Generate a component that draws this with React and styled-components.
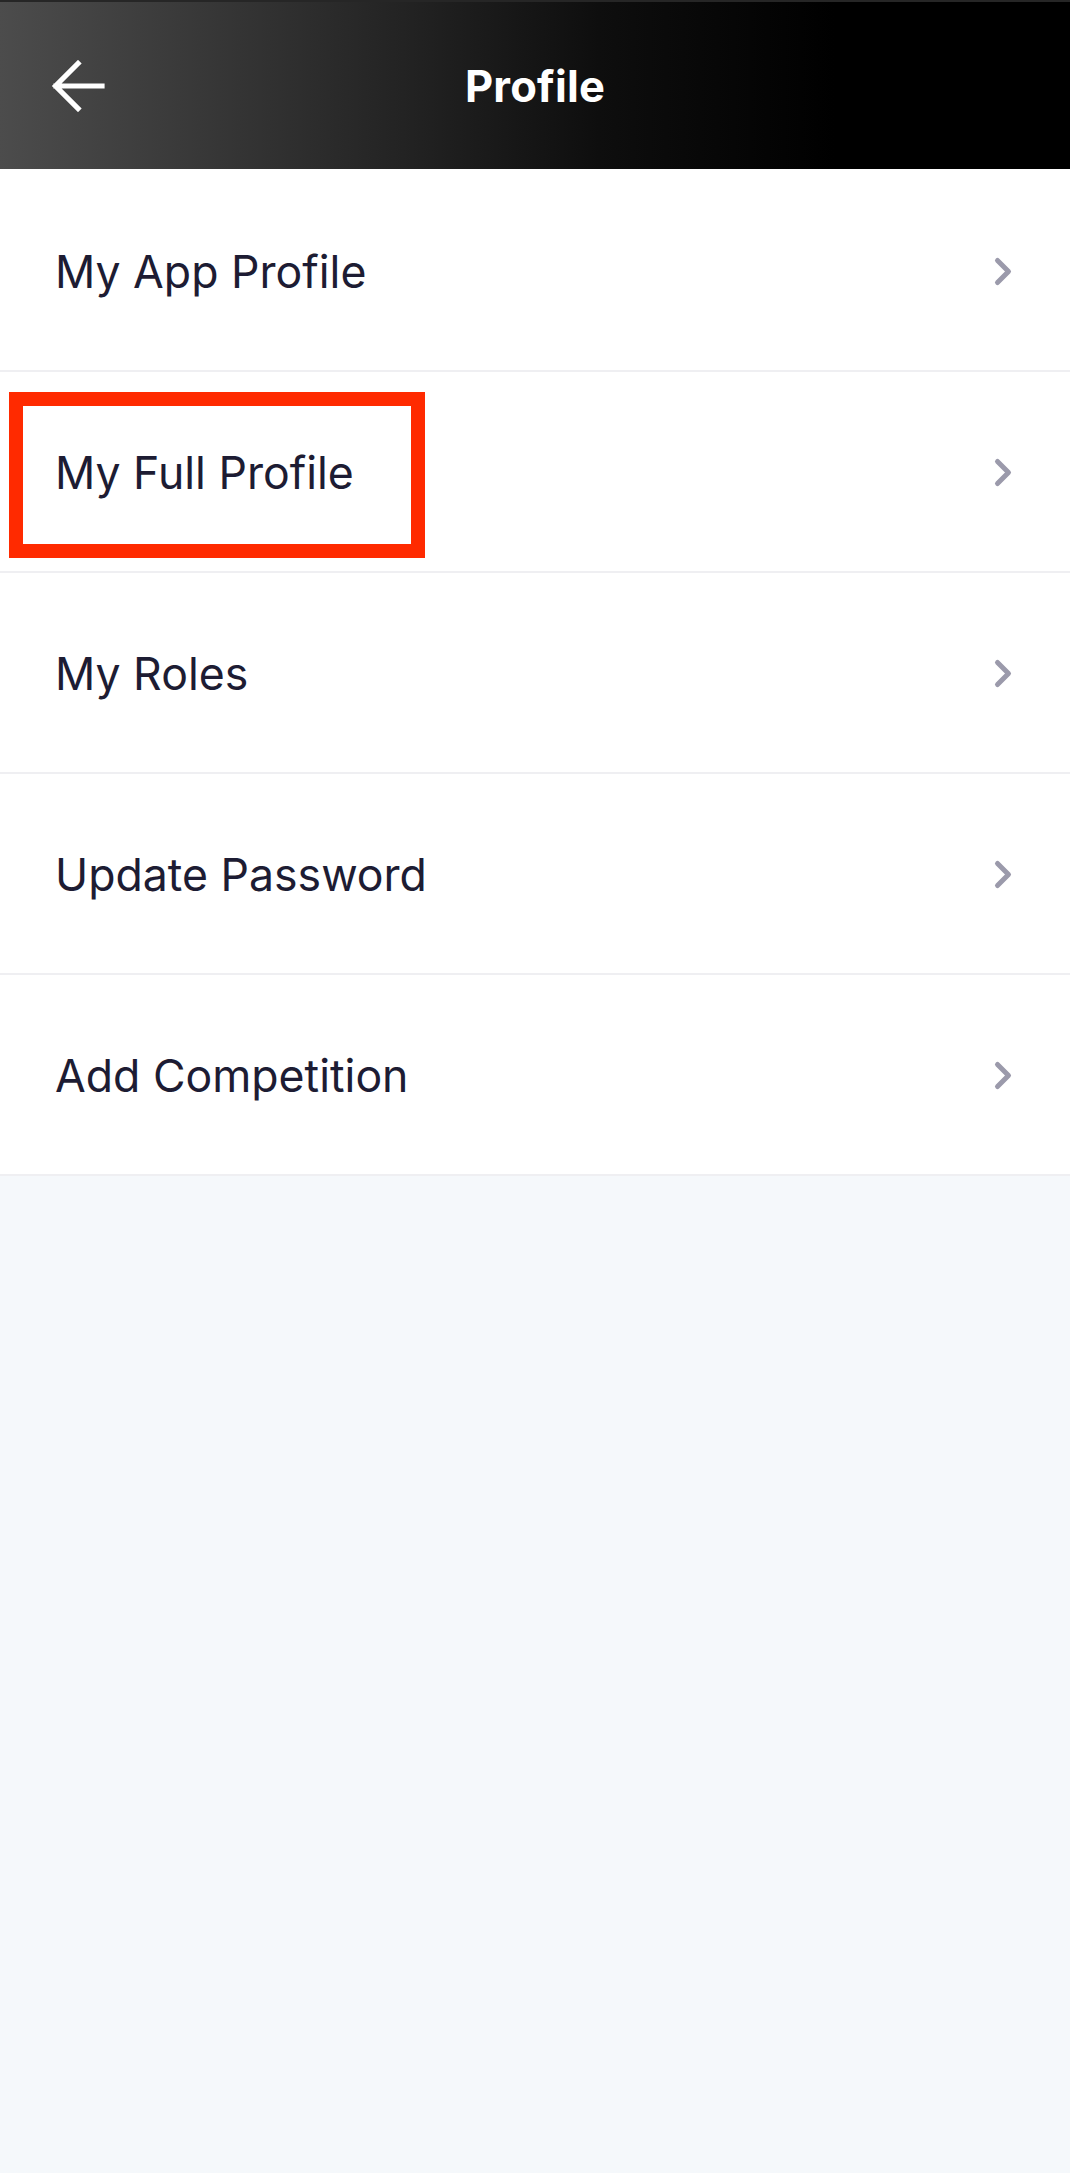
import React from "react";
import styled, { createGlobalStyle } from "styled-components";

const GlobalStyle = createGlobalStyle`
  html, body {
    margin: 0;
    padding: 0;
    background: #f5f8fb;
    font-family: Inter, "Noto Sans", "Liberation Sans", sans-serif;
  }
  * { box-sizing: border-box; }
`;

const Page = styled.div`
  width: 1070px;
  min-height: 2173px;
  background: #f5f8fb;
`;

const Header = styled.header`
  height: 169px;
  display: grid;
  grid-template-columns: 160px 1fr 160px;
  align-items: center;
  background: linear-gradient(90deg, #4c4c4c 0%, #2e2e2e 28%, #0e0e0e 56%, #000 78%);
  border-top: 2px solid #262626;
`;

const BackButton = styled.button`
  width: 80px;
  height: 80px;
  margin-left: 38px;
  padding: 0;
  border: none;
  background: transparent;
  display: flex;
  align-items: center;
  justify-content: center;
  cursor: pointer;
`;

const Title = styled.h1`
  margin: 0;
  text-align: center;
  color: #fff;
  font-size: 43.5px;
  font-weight: 700;
  letter-spacing: 0.2px;
`;

const List = styled.ul`
  margin: 0;
  padding: 2px 0 0;
  list-style: none;
  background: #fff;
`;

const Row = styled.li`
  position: relative;
  height: 201px;
  display: flex;
  align-items: center;
  justify-content: space-between;
  padding: 3px 55px 0 55px;
  border-bottom: 2px solid #efeff2;
  cursor: pointer;
`;

const Label = styled.span`
  font-size: 44.6px;
  font-weight: 400;
  color: #1d1c33;
`;

const Highlight = styled.div`
  position: absolute;
  left: 9px;
  top: 20px;
  width: 416px;
  height: 166px;
  border: 14px solid #ff2a00;
  pointer-events: none;
`;

const BackArrow = () => (
  <svg width="56" height="52" viewBox="0 0 56 52" fill="none">
    <path
      d="M52 26 H6 M28 3.5 L5.5 26 L28 48.5"
      stroke="#fff"
      strokeWidth="5.2"
      strokeLinecap="square"
      strokeLinejoin="miter"
    />
  </svg>
);

const Chevron = () => (
  <svg width="22" height="32" viewBox="0 0 22 32" fill="none">
    <path
      d="M4.5 4.5 L15.5 15.5 L4.5 26.5"
      stroke="#9b9aab"
      strokeWidth="5"
      strokeLinecap="round"
      strokeLinejoin="round"
    />
  </svg>
);

const items = [
  { label: "My App Profile" },
  { label: "My Full Profile", marked: true },
  { label: "My Roles" },
  { label: "Update Password" },
  { label: "Add Competition" },
];

export default function App() {
  return (
    <>
      <GlobalStyle />
      <Page>
        <Header>
          <BackButton aria-label="Back">
            <BackArrow />
          </BackButton>
          <Title>Profile</Title>
          <span />
        </Header>
        <List>
          {items.map((item) => (
            <Row key={item.label}>
              <Label>{item.label}</Label>
              <Chevron />
              {item.marked && <Highlight />}
            </Row>
          ))}
        </List>
      </Page>
    </>
  );
}
